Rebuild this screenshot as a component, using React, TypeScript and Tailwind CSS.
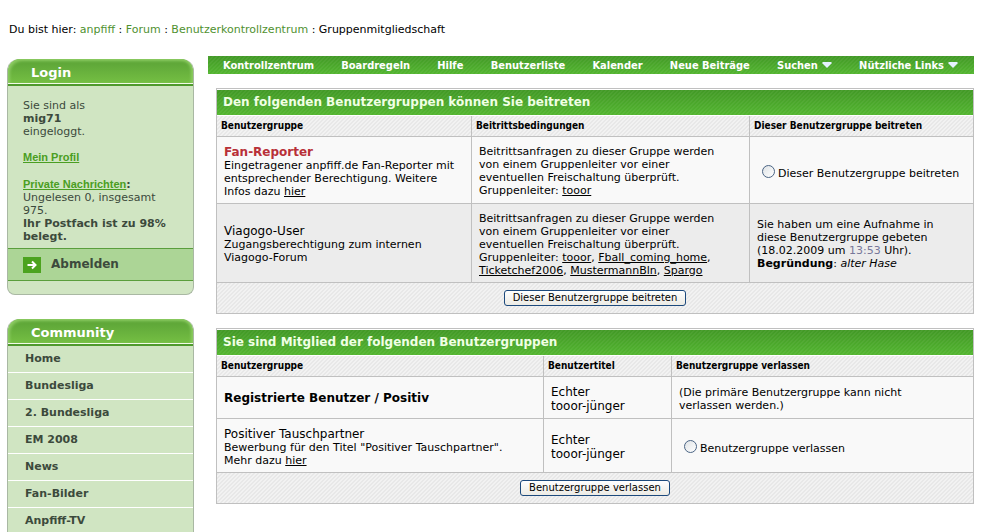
import type { ReactNode } from "react";
import { clsx } from "clsx";

const crumbs = ["anpfiff", "Forum", "Benutzerkontrollzentrum"];

const navItems = [
  { label: "Kontrollzentrum" },
  { label: "Boardregeln" },
  { label: "Hilfe" },
  { label: "Benutzerliste" },
  { label: "Kalender" },
  { label: "Neue Beiträge" },
  { label: "Suchen", menu: true },
  { label: "Nützliche Links", menu: true },
];

const communityLinks = [
  "Home",
  "Bundesliga",
  "2. Bundesliga",
  "EM 2008",
  "News",
  "Fan-Bilder",
  "Anpfiff-TV",
];

const greenStripes =
  "bg-[linear-gradient(135deg,#ffffff0c_25%,transparent_25%_50%,#ffffff0c_50%_75%,transparent_75%),linear-gradient(#429926,#53b530)] bg-[length:4px_4px,100%_100%]";
const greyStripes =
  "bg-[linear-gradient(135deg,#e8e8e8_25%,#f2f2f2_25%_50%,#e8e8e8_50%_75%,#f2f2f2_75%)] bg-[length:4px_4px]";

const SideTitle = ({ children }: { children: ReactNode }) => (
  <h2 className="h-[27px] rounded-t-xl border-b-2 border-[#4f9a2d] bg-linear-to-b from-[#5aa236] to-[#76c044] pl-[23px] text-[13px] leading-[27px] font-bold text-white shadow-[inset_0_-1px_0_#f2fae9,inset_2px_2px_3px_#8ccb62,inset_-2px_0_3px_#8ccb62]">
    {children}
  </h2>
);

const TextLink = ({ children }: { children: ReactNode }) => (
  <a href="#" className="underline">
    {children}
  </a>
);

const Panel = ({ title, children }: { title: string; children: ReactNode }) => (
  <section className="border border-[#c0c0c0] pt-px">
    <h2
      className={clsx(
        "mb-px h-[25px] pl-1.5 text-[12px] leading-[25px] font-bold text-[#f0ffe4]",
        greenStripes
      )}
    >
      {title}
    </h2>
    {children}
  </section>
);

const HeadCell = ({ children }: { children?: ReactNode }) => (
  <th
    scope="col"
    className={clsx(
      "h-[21px] border-r border-b border-[#c0c0c0] pl-1 text-left font-['DejaVu_Sans_Condensed','DejaVu_Sans',sans-serif] text-[10px] leading-3 font-bold last:border-r-0",
      greyStripes
    )}
  >
    {children}
  </th>
);

const Cell = ({
  children,
  className = "pl-[7px]",
}: {
  children: ReactNode;
  className?: string;
}) => (
  <td
    className={clsx(
      "border-r border-b border-[#c0c0c0] pt-0.5 pr-1 align-middle last:border-r-0",
      className
    )}
  >
    {children}
  </td>
);

const PanelFooter = ({ label }: { label: string }) => (
  <div className={clsx("flex h-[30px] items-center justify-center", greyStripes)}>
    <button
      type="button"
      className="h-4 rounded-[3px] border border-[#1d4a7d] bg-linear-to-b from-white to-[#ecebe5] px-2 text-[10px] leading-3"
    >
      {label}
    </button>
  </div>
);

const Radio = ({ name, label }: { name: string; label: string }) => (
  <label className="flex items-center gap-[3px] pt-1 whitespace-nowrap">
    <input
      type="radio"
      name={name}
      className="mb-1 size-[13px] shrink-0 appearance-none rounded-full border border-[#4a6484] bg-linear-to-br from-[#dfe3e6] to-white checked:border-4"
    />
    {label}
  </label>
);

const Conditions = ({ children }: { children: ReactNode }) => (
  <>
    Beitrittsanfragen zu dieser Gruppe werden
    <br />
    von einem Gruppenleiter vor einer
    <br />
    eventuellen Freischaltung überprüft.
    <br />
    Gruppenleiter: {children}
  </>
);

const App = () => {
  return (
    <div className="h-screen overflow-hidden bg-white font-['DejaVu_Sans',Verdana,sans-serif] text-[11px] leading-[13px] text-black">
      <nav aria-label="Pfad" className="px-[9px] pt-[23px]">
        Du bist hier:{" "}
        {crumbs.map((crumb) => (
          <span key={crumb}>
            <a href="#" className="text-[#4f9130]">
              {crumb}
            </a>
            {" : "}
          </span>
        ))}
        Gruppenmitgliedschaft
      </nav>

      <div className="flex gap-3.5 pt-5 pr-4 pl-[7px]">
        <aside className="w-[187px] shrink-0 pt-[3px] text-[#3c4a3c]">
          <section className="overflow-hidden rounded-t-xl rounded-b-lg border border-t-0 border-[#a9b8a3] bg-[#d0e5c2]">
            <SideTitle>Login</SideTitle>
            <div className="pt-[13px] pr-2 pb-[5px] pl-[15px]">
              <p>
                Sie sind als
                <br />
                <b>mig71</b>
                <br />
                eingeloggt.
              </p>
              <p className="mt-[13px] font-['Liberation_Sans',Arial,sans-serif] font-bold text-[#4a9e22]">
                <TextLink>Mein Profil</TextLink>
              </p>
              <p className="mt-3.5">
                <b className="font-['Liberation_Sans',Arial,sans-serif] text-[#4a9e22]">
                  <TextLink>Private Nachrichten</TextLink>
                </b>
                <b>:</b>
                <br />
                Ungelesen 0, insgesamt
                <br />
                975.
                <br />
                <b>
                  Ihr Postfach ist zu 98%
                  <br />
                  belegt.
                </b>
              </p>
            </div>
            <a
              href="#"
              className="mb-[13px] flex h-[33px] items-center gap-2.5 border-y border-[#5a9e3c] bg-[#acd596] pl-[15px] text-[12px] font-bold"
            >
              <svg viewBox="0 0 18 16" className="h-4 w-[18px]" aria-hidden="true">
                <rect width="18" height="16" fill="#4ca31f" />
                <path
                  d="M4.5 8h8M9 4.5 12.5 8 9 11.5"
                  fill="none"
                  stroke="#fff"
                  strokeWidth="2"
                />
              </svg>
              Abmelden
            </a>
          </section>

          <section className="mt-6 overflow-hidden rounded-t-xl border border-y-0 border-[#a9b8a3] bg-[#d0e5c2]">
            <SideTitle>Community</SideTitle>
            <ul>
              {communityLinks.map((link) => (
                <li key={link} className="border-b border-white">
                  <a href="#" className="block pt-1.5 pb-[7px] pl-[17px] font-bold">
                    {link}
                  </a>
                </li>
              ))}
            </ul>
          </section>
        </aside>

        <main className="min-w-0 flex-1">
          <nav
            aria-label="Forum"
            className={clsx(
              "flex h-[18px] items-center justify-between pr-4 pl-[15px] font-['DejaVu_Sans_Condensed','DejaVu_Sans',sans-serif] text-[11px] font-bold whitespace-nowrap text-white",
              greenStripes
            )}
          >
            {navItems.map((item) => (
              <a key={item.label} href="#" className="flex items-center gap-1">
                {item.label}
                {item.menu && (
                  <svg viewBox="0 0 10 6" className="h-1.5 w-2.5" aria-hidden="true">
                    <path d="M0 1 1 0h8l1 1-5 5z" fill="#e6f2ff" />
                  </svg>
                )}
              </a>
            ))}
          </nav>

          <div className="flex flex-col gap-3.5 pt-3.5 pl-2">
            <Panel title="Den folgenden Benutzergruppen können Sie beitreten">
              <table className="w-full table-fixed border-separate border-spacing-0">
                <colgroup>
                  <col className="w-[255px]" />
                  <col className="w-[278px]" />
                  <col />
                </colgroup>
                <thead>
                  <tr>
                    <HeadCell>Benutzergruppe</HeadCell>
                    <HeadCell>Beitrittsbedingungen</HeadCell>
                    <HeadCell>Dieser Benutzergruppe beitreten</HeadCell>
                  </tr>
                </thead>
                <tbody>
                  <tr className="h-[67px] bg-[#f9f9f9]">
                    <Cell>
                      <b className="text-[12px] leading-3.5 text-[#b83038]">
                        Fan-Reporter
                      </b>
                      <br />
                      Eingetragener anpfiff.de Fan-Reporter mit
                      <br />
                      entsprechender Berechtigung. Weitere
                      <br />
                      Infos dazu <TextLink>hier</TextLink>
                    </Cell>
                    <Cell>
                      <Conditions>
                        <TextLink>tooor</TextLink>
                      </Conditions>
                    </Cell>
                    <Cell className="pl-3">
                      <Radio name="join" label="Dieser Benutzergruppe beitreten" />
                    </Cell>
                  </tr>
                  <tr className="h-[79px] bg-[#ececec]">
                    <Cell>
                      <span className="text-[12px] leading-3.5">Viagogo-User</span>
                      <br />
                      Zugangsberechtigung zum internen
                      <br />
                      Viagogo-Forum
                    </Cell>
                    <Cell>
                      <Conditions>
                        <TextLink>tooor</TextLink>,{" "}
                        <TextLink>Fball_coming_home</TextLink>,
                        <br />
                        <TextLink>Ticketchef2006</TextLink>,{" "}
                        <TextLink>MustermannBln</TextLink>,{" "}
                        <TextLink>Spargo</TextLink>
                      </Conditions>
                    </Cell>
                    <Cell>
                      Sie haben um eine Aufnahme in
                      <br />
                      diese Benutzergruppe gebeten
                      <br />
                      (18.02.2009 um <span className="text-[#777799]">13:53</span>{" "}
                      Uhr).
                      <br />
                      <b>Begründung</b>: <i>alter Hase</i>
                    </Cell>
                  </tr>
                </tbody>
              </table>
              <PanelFooter label="Dieser Benutzergruppe beitreten" />
            </Panel>

            <Panel title="Sie sind Mitglied der folgenden Benutzergruppen">
              <table className="w-full table-fixed border-separate border-spacing-0 bg-[#f9f9f9]">
                <colgroup>
                  <col className="w-[327px]" />
                  <col className="w-32" />
                  <col />
                </colgroup>
                <thead>
                  <tr>
                    <HeadCell>Benutzergruppe</HeadCell>
                    <HeadCell>Benutzertitel</HeadCell>
                    <HeadCell>Benutzergruppe verlassen</HeadCell>
                  </tr>
                </thead>
                <tbody>
                  <tr className="h-[42px]">
                    <Cell className="pl-[7px] text-[12px] font-bold">
                      Registrierte Benutzer / Positiv
                    </Cell>
                    <Cell className="pl-[7px] text-[12px] leading-3.5">
                      Echter
                      <br />
                      tooor-jünger
                    </Cell>
                    <Cell>
                      (Die primäre Benutzergruppe kann nicht
                      <br />
                      verlassen werden.)
                    </Cell>
                  </tr>
                  <tr className="h-[54px]">
                    <Cell>
                      <span className="text-[12px] leading-3.5">
                        Positiver Tauschpartner
                      </span>
                      <br />
                      Bewerbung für den Titel "Positiver Tauschpartner".
                      <br />
                      Mehr dazu <TextLink>hier</TextLink>
                    </Cell>
                    <Cell className="pl-[7px] text-[12px] leading-3.5">
                      Echter
                      <br />
                      tooor-jünger
                    </Cell>
                    <Cell className="pl-3">
                      <Radio name="leave" label="Benutzergruppe verlassen" />
                    </Cell>
                  </tr>
                </tbody>
              </table>
              <PanelFooter label="Benutzergruppe verlassen" />
            </Panel>
          </div>
        </main>
      </div>
    </div>
  );
};

export default App;
